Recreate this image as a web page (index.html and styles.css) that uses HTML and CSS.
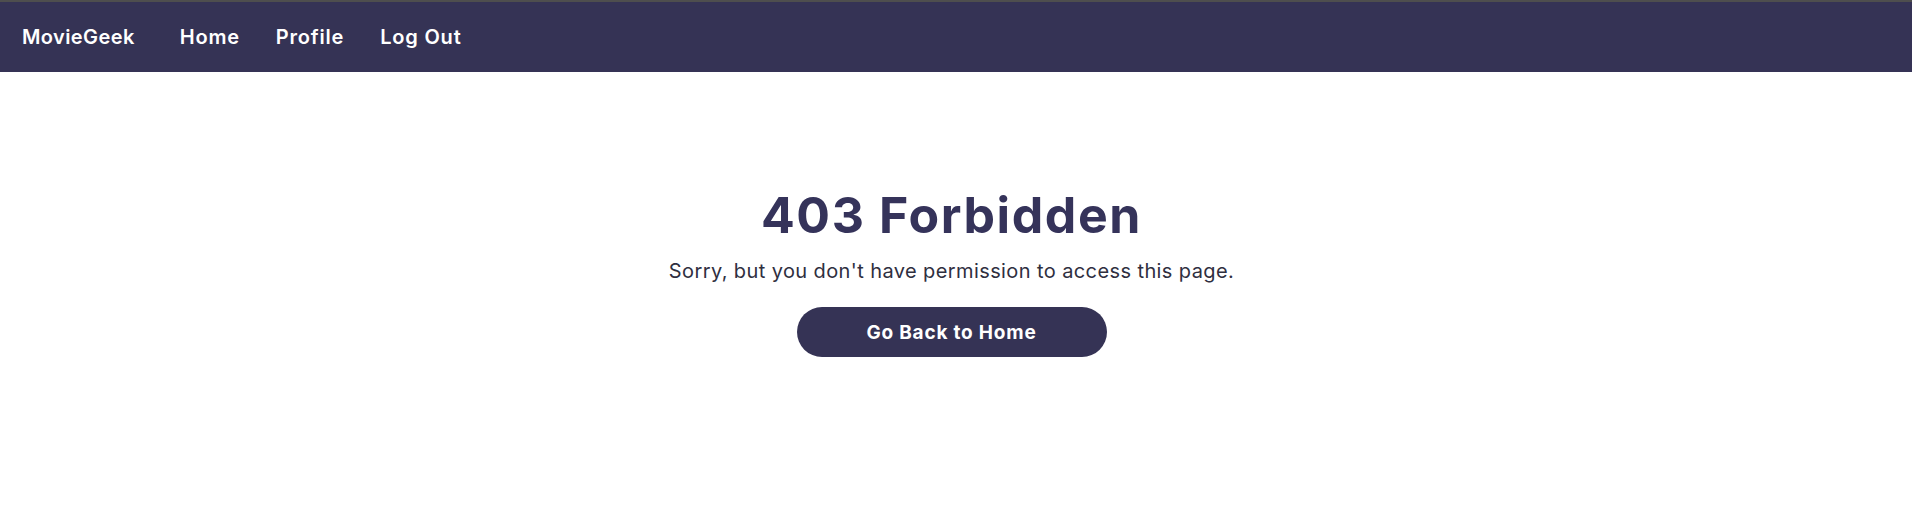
FILE: index.html
```html
<!DOCTYPE html>
<html lang="en">
<head>
<meta charset="utf-8">
<title>403 Forbidden - MovieGeek</title>
<link rel="stylesheet" href="styles.css">
</head>
<body>
<nav class="navbar">
  <a class="brand" href="#">MovieGeek</a>
  <ul class="nav-links">
    <li><a href="#">Home</a></li>
    <li><a href="#">Profile</a></li>
    <li><a href="#">Log Out</a></li>
  </ul>
</nav>
<main class="error-page">
  <h1 class="error-title">403 Forbidden</h1>
  <p class="error-text">Sorry, but you don't have permission to access this page.</p>
  <a class="home-btn" href="#">Go Back to Home</a>
</main>
</body>
</html>
```

FILE: styles.css
```css
* { box-sizing: border-box; }
body {
  margin: 0;
  font-family: Inter, "Open Sans", sans-serif;
  background: #ffffff;
  color: #35335a;
}
.navbar {
  height: 72px;
  border-top: 2px solid #4e4e4e;
  background: #353355;
  display: flex;
  align-items: center;
  padding: 0 22px;
}
.brand {
  color: #ffffff;
  text-decoration: none;
  font-weight: 600;
  font-size: 20px;
  letter-spacing: 0.4px;
  margin-right: 45px;
}
.nav-links {
  list-style: none;
  margin: 0;
  padding: 0;
  display: flex;
  gap: 36px;
}
.nav-links a {
  color: #ffffff;
  text-decoration: none;
  font-weight: 600;
  font-size: 20px;
  letter-spacing: 0.8px;
}
.error-page {
  display: flex;
  flex-direction: column;
  align-items: center;
  padding: 113px 9px 0 0;
}
.error-title {
  margin: 0;
  font-size: 50px;
  line-height: 1.2;
  font-weight: 700;
  letter-spacing: 1.6px;
  color: #35335a;
}
.error-text {
  margin: 14px 0 0;
  font-size: 20px;
  line-height: 1.2;
  letter-spacing: 0.4px;
  color: #2f2f3f;
}
.home-btn {
  margin-top: 24px;
  width: 310px;
  height: 50px;
  border-radius: 25px;
  background: #353355;
  color: #ffffff;
  text-decoration: none;
  font-weight: 700;
  font-size: 19px;
  letter-spacing: 0.8px;
  display: flex;
  align-items: center;
  justify-content: center;
}
```
